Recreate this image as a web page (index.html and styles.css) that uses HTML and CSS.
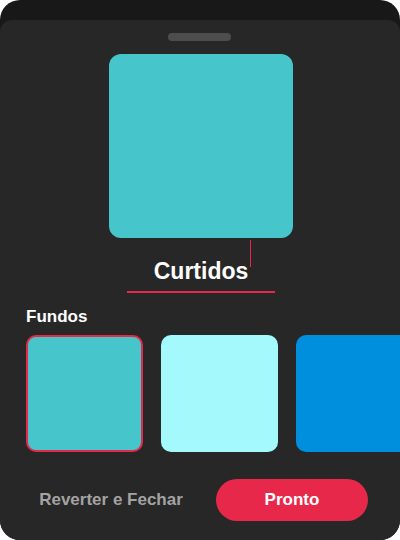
FILE: index.html
```html
<!DOCTYPE html>
<html lang="pt">
<head>
<meta charset="utf-8">
<link rel="stylesheet" href="styles.css">
</head>
<body>
<div class="frame">
  <div class="sheet">
    <div class="handle"></div>
    <div class="art"></div>
    <div class="name-field">
      <span class="name-text">Curtidos</span>
      <span class="cursor"></span>
    </div>
    <div class="section-label">Fundos</div>
    <div class="swatches">
      <div class="swatch teal selected"></div>
      <div class="swatch cyan"></div>
      <div class="swatch blue"></div>
    </div>
    <div class="footer">
      <button class="btn-revert">Reverter e Fechar</button>
      <button class="btn-done">Pronto</button>
    </div>
  </div>
</div>
</body>
</html>
```
FILE: styles.css
```css
html, body {
  margin: 0;
  padding: 0;
  background: #ffffff;
}
body {
  font-family: "Liberation Sans", Arial, sans-serif;
}
.frame {
  width: 400px;
  height: 540px;
  box-sizing: border-box;
  padding-top: 20px;
  background: #181818;
  border-radius: 20px;
  overflow: hidden;
}
.sheet {
  height: 520px;
  background: #272727;
  border-radius: 12px 12px 0 0;
  display: flex;
  flex-direction: column;
}
.handle {
  width: 63px;
  height: 8px;
  margin: 13px 0 0 168px;
  background: #4d4d4d;
  border-radius: 4px;
}
.art {
  width: 184px;
  height: 184px;
  margin: 13px 0 0 109px;
  background: #46c5cb;
  border-radius: 12px;
}
.name-field {
  position: relative;
  width: 148px;
  margin: 0 0 0 127px;
  padding: 19px 0 6px;
  border-bottom: 2px solid #e8284a;
  text-align: center;
  line-height: 28px;
  height: 28px;
}
.name-text {
  color: #ffffff;
  font-size: 23px;
  font-weight: 700;
}
.cursor {
  position: absolute;
  left: 123px;
  top: 2px;
  width: 1px;
  height: 27px;
  background: #e8284a;
}
.section-label {
  margin-top: 14px;
  padding-left: 26px;
  color: #ffffff;
  font-size: 17px;
  font-weight: 700;
  line-height: 20px;
}
.swatches {
  margin-top: 8px;
  padding-left: 26px;
  display: flex;
  gap: 18px;
  overflow: hidden;
}
.swatch {
  flex: 0 0 117px;
  height: 117px;
  box-sizing: border-box;
  border-radius: 10px;
}
.swatch.selected {
  border: 2px solid #e8284a;
}
.teal { background: #46c5cb; }
.cyan { background: #a3f9fc; }
.blue { background: #008fdd; }
.footer {
  margin-top: 27px;
  padding: 0 32px 0 22px;
  display: flex;
  gap: 16px;
  align-items: center;
}
.footer button {
  font-family: "Liberation Sans", Arial, sans-serif;
  font-size: 17px;
  font-weight: 700;
  border: none;
  cursor: pointer;
}
.btn-revert {
  flex: 1;
  height: 42px;
  background: transparent;
  color: #a3a3a3;
  padding: 0;
}
.btn-done {
  flex: 0 0 152px;
  height: 42px;
  background: #e8284a;
  color: #ffffff;
  border-radius: 21px;
}
```
